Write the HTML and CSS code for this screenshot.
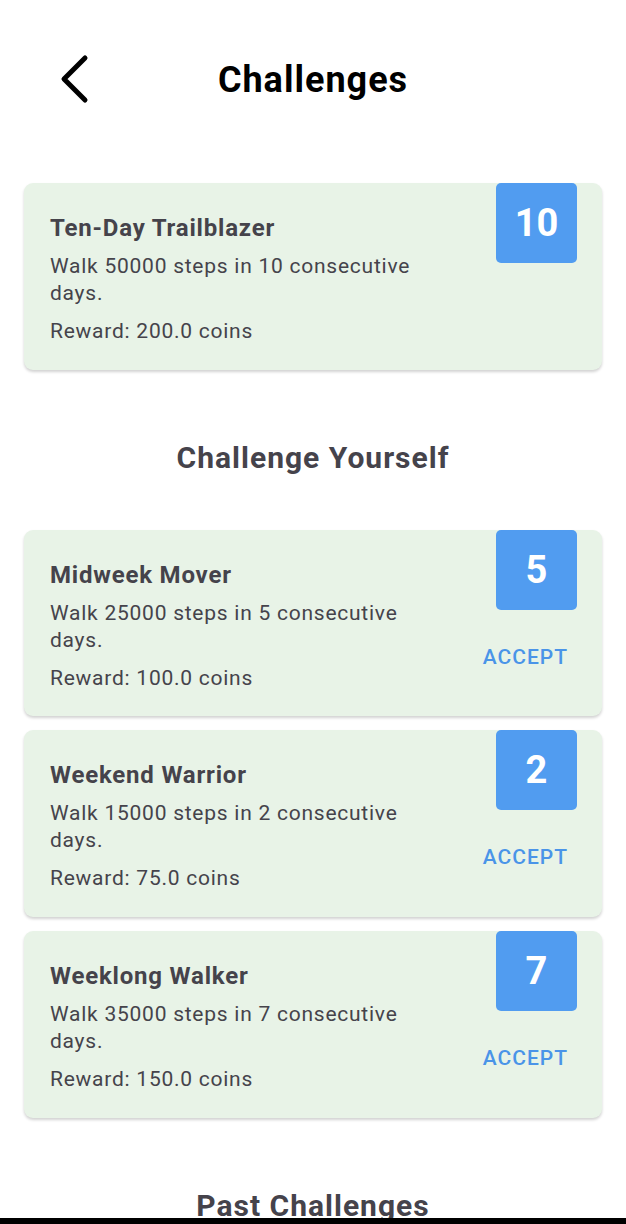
FILE: index.html
```html
<!DOCTYPE html>
<html>
<head>
<meta charset="utf-8">
<link rel="stylesheet" href="styles.css">
</head>
<body>
<div class="screen">
  <header class="topbar">
    <button class="back" aria-label="Back">
      <svg width="32" height="50" viewBox="0 0 32 50"><path d="M27 4 L6 25 L27 46" fill="none" stroke="#000" stroke-width="5" stroke-linecap="round" stroke-linejoin="round"/></svg>
    </button>
    <h1 class="title">Challenges</h1>
  </header>

  <section class="list">
    <div class="card">
      <div class="info">
        <div class="name">Ten-Day Trailblazer</div>
        <div class="desc">Walk 50000 steps in 10 consecutive days.</div>
        <div class="reward">Reward: 200.0 coins</div>
      </div>
      <div class="side">
        <div class="badge">10</div>
      </div>
    </div>
  </section>

  <h2 class="section-title first">Challenge Yourself</h2>

  <section class="list">
    <div class="card">
      <div class="info">
        <div class="name">Midweek Mover</div>
        <div class="desc">Walk 25000 steps in 5 consecutive days.</div>
        <div class="reward">Reward: 100.0 coins</div>
      </div>
      <div class="side">
        <div class="badge">5</div>
        <button class="accept">ACCEPT</button>
      </div>
    </div>
    <div class="card">
      <div class="info">
        <div class="name">Weekend Warrior</div>
        <div class="desc">Walk 15000 steps in 2 consecutive days.</div>
        <div class="reward">Reward: 75.0 coins</div>
      </div>
      <div class="side">
        <div class="badge">2</div>
        <button class="accept">ACCEPT</button>
      </div>
    </div>
    <div class="card">
      <div class="info">
        <div class="name">Weeklong Walker</div>
        <div class="desc">Walk 35000 steps in 7 consecutive days.</div>
        <div class="reward">Reward: 150.0 coins</div>
      </div>
      <div class="side">
        <div class="badge">7</div>
        <button class="accept">ACCEPT</button>
      </div>
    </div>
  </section>

  <h2 class="section-title past">Past Challenges</h2>
</div>
<div class="navbar"></div>
</body>
</html>
```

FILE: styles.css
```css
* { box-sizing: border-box; }
html, body {
  margin: 0;
  padding: 0;
  background: #fff;
  font-family: Roboto, "Noto Sans", sans-serif;
}
.screen {
  width: 626px;
  height: 1224px;
  overflow: hidden;
}
.topbar {
  position: relative;
  height: 160px;
  display: flex;
  justify-content: center;
  padding-top: 57px;
}
.back {
  position: absolute;
  left: 58px;
  top: 54px;
  border: 0;
  background: none;
  padding: 0;
  width: 32px;
  height: 50px;
}
.back svg { display: block; }
.title {
  margin: 0;
  font-size: 36px;
  line-height: 46px;
  font-weight: 700;
  letter-spacing: 1px;
  color: #000;
}
.list {
  display: flex;
  flex-direction: column;
  gap: 14.3px;
  padding: 23px 24px 0;
}
.card {
  display: flex;
  justify-content: space-between;
  background: #e8f3e7;
  border-radius: 9px;
  box-shadow: 0 2px 3px rgba(0,0,0,0.18);
  padding: 0 25px 18px 26px;
  min-height: 186.6px;
}
.info {
  width: 400px;
  padding-top: 31px;
  color: #45434b;
}
.name {
  font-size: 24px;
  line-height: 28px;
  font-weight: 700;
  letter-spacing: 0.8px;
}
.desc {
  margin-top: 11px;
  font-size: 21px;
  line-height: 27px;
  letter-spacing: 0.75px;
}
.reward {
  margin-top: 11px;
  font-size: 21px;
  line-height: 27px;
  letter-spacing: 0.75px;
}
.side {
  display: flex;
  flex-direction: column;
  align-items: flex-end;
}
.badge {
  width: 81px;
  height: 80px;
  background: #519cf0;
  border-radius: 5px;
  color: #fff;
  font-size: 38px;
  font-weight: 700;
  display: flex;
  align-items: center;
  justify-content: center;
}
.accept {
  margin-top: 33px;
  border: 0;
  background: none;
  padding: 0 9px 0 0;
  font-family: Roboto, sans-serif;
  font-size: 21px;
  font-weight: 500;
  letter-spacing: 1px;
  line-height: 28px;
  color: #4a94e8;
}
.section-title {
  margin: 0;
  text-align: center;
  font-size: 30px;
  font-weight: 700;
  letter-spacing: 1px;
  color: #45434b;
  line-height: 36px;
}
.section-title.first {
  margin-top: 70px;
  margin-bottom: 54px;
}
.section-title.first + .list { padding-top: 0; }
.section-title.past {
  margin-top: 70px;
}
.navbar {
  position: fixed;
  left: 0;
  right: 0;
  bottom: 0;
  height: 6px;
  background: #000;
}
```
